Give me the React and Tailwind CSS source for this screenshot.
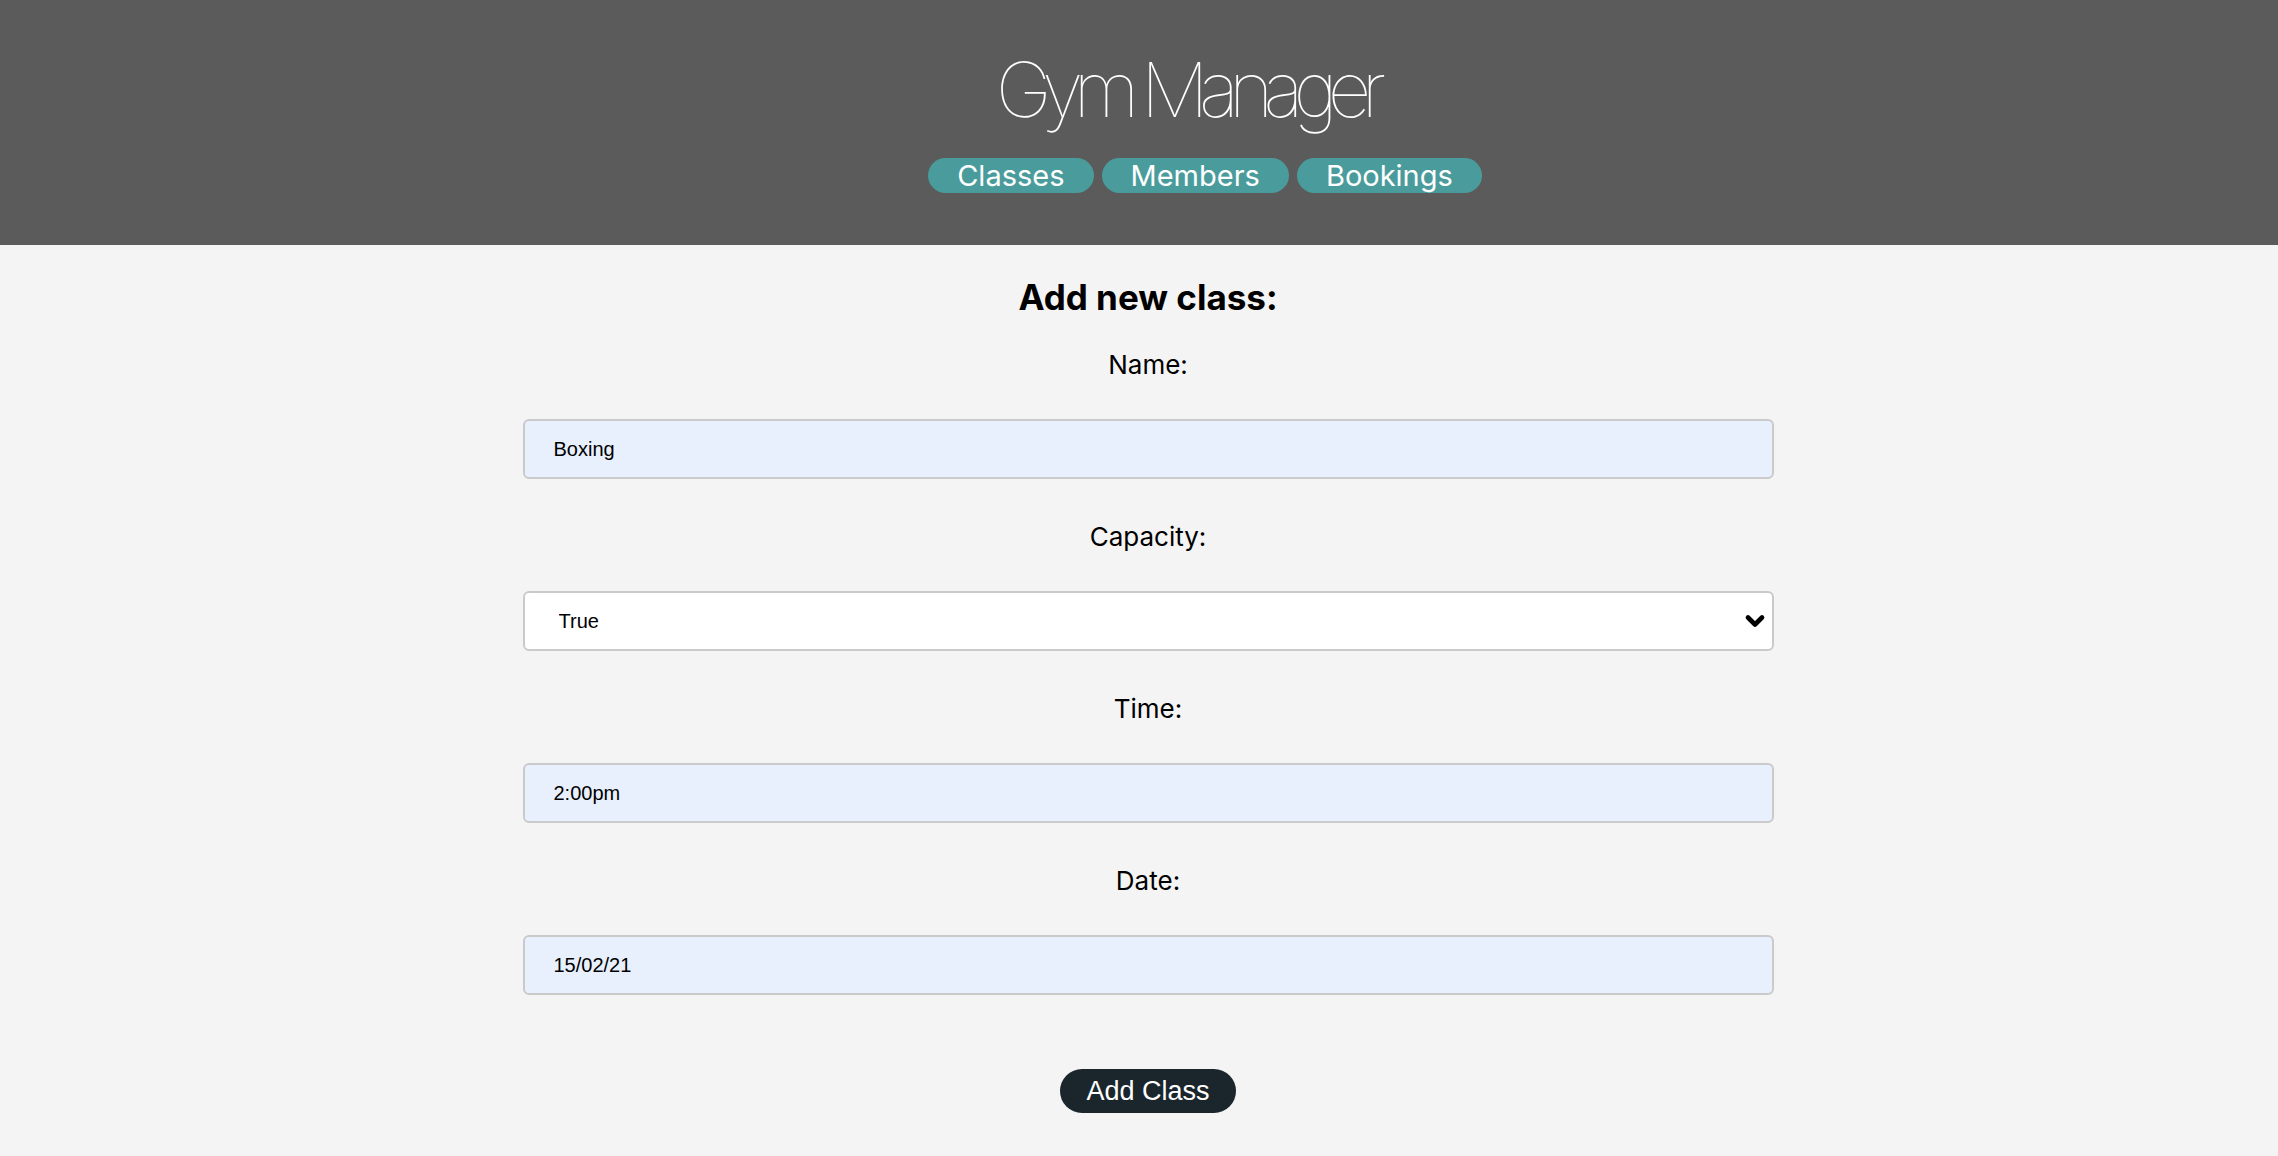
import { ChevronDown } from 'lucide-react';

const NAV = ['Classes', 'Members', 'Bookings'];

function Field({ label, children }) {
  return (
    <div className="flex flex-col items-center mt-[33px]">
      <label className="text-[26px] leading-[30px] text-black font-['Inter',sans-serif]">{label}</label>
      <div className="mt-[39px] w-[1251px]">{children}</div>
    </div>
  );
}

const inputCls = "w-full h-[60px] bg-[#e8f0fe] border-2 border-[#cacaca] rounded-[6px] pl-[29px] pr-4 text-[20px] text-black font-['Liberation_Sans',sans-serif] outline-none";

export default function App() {
  return (
    <div className="min-h-screen bg-[#f4f4f4]">
      <header className="h-[245px] bg-[#5b5b5b] flex flex-col items-center pl-[132px] pt-[51px]">
        <h1 className="mr-[38px] text-white text-[76px] leading-none font-thin tracking-[-0.13em] font-['Inter',sans-serif]">Gym Manager</h1>
        <nav className="flex gap-2 mt-[31px]">
          {NAV.map(n => (
            <button key={n} className="h-[35px] px-[29px] rounded-full bg-[#4a9c9c] text-white text-[29px] leading-[36px] font-['Inter',sans-serif]">
              {n}
            </button>
          ))}
        </nav>
      </header>

      <main className="flex flex-col items-center pl-[18px] pt-[32px] pb-[40px]">
        <h2 className="text-[35px] leading-[40px] font-bold text-black font-['Inter',sans-serif]">Add new class:</h2>
        <div className="flex flex-col">
          <Field label="Name:">
            <input defaultValue="Boxing" className={inputCls} />
          </Field>
          <div className="mt-[10px]">
            <Field label="Capacity:">
              <div className="relative">
                <select defaultValue="True" className="w-full h-[60px] bg-white border-2 border-[#cacaca] rounded-[6px] pl-[34px] text-[20px] text-black font-['Liberation_Sans',sans-serif] appearance-none outline-none">
                  <option>True</option>
                  <option>False</option>
                </select>
                <ChevronDown size={28} strokeWidth={4} className="absolute right-[5px] top-1/2 -translate-y-1/2 text-black pointer-events-none" />
              </div>
            </Field>
          </div>
          <div className="mt-[10px]">
            <Field label="Time:">
              <input defaultValue="2:00pm" className={inputCls} />
            </Field>
          </div>
          <div className="mt-[10px]">
            <Field label="Date:">
              <input defaultValue="15/02/21" className={inputCls} />
            </Field>
          </div>
        </div>
        <button className="mt-[74px] h-[44px] px-[26px] rounded-full bg-[#1a262c] text-white text-[27px] font-['Liberation_Sans',sans-serif]">
          Add Class
        </button>
      </main>
    </div>
  );
}
